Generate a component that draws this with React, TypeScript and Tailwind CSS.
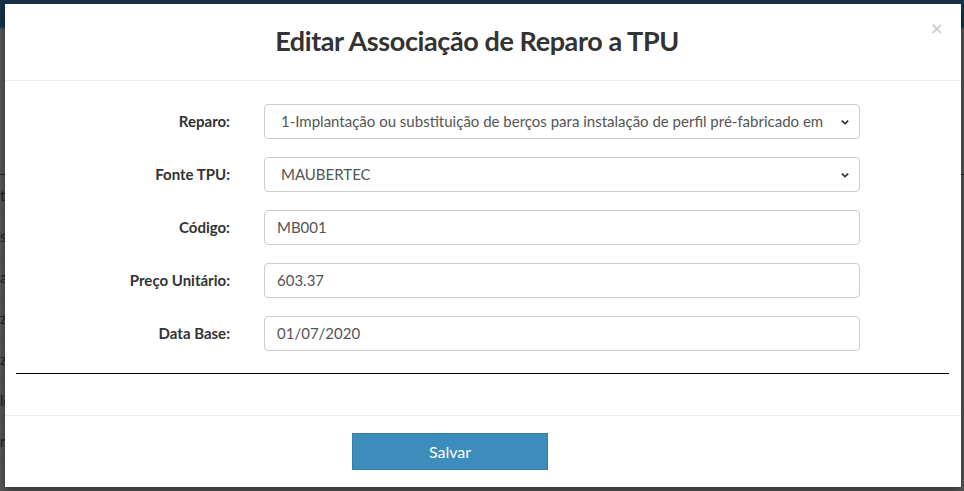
export default function App() {
  const rows = [
    { label: "Reparo:", value: "1-Implantação ou substituição de berços para instalação de perfil pré-fabricado em", select: true },
    { label: "Fonte TPU:", value: "MAUBERTEC", select: true },
    { label: "Código:", value: "MB001" },
    { label: "Preço Unitário:", value: "603.37" },
    { label: "Data Base:", value: "01/07/2020" },
  ];

  return (
    <div className="relative h-[491px] w-[964px] overflow-hidden bg-[#5a5a5a] font-['Lato',sans-serif]">
      {/* page behind the backdrop */}
      <div className="flex h-[27px] items-start bg-[#17344a] pl-[10px] text-[17px] leading-[4px] text-[#6f7d88]">
        <span className="-mt-[10px]">Sistema de Gerenciamento de Obras de Arte</span>
      </div>
      <div className="h-[2px] bg-[#1f4d6b]" />
      <div className="mt-[145px] border-t border-[#222]">
        {["tipo", "status", "ação", "zona", "zona", "lote", "rede"].map((t, i) => (
          <div key={i} className="flex h-[41px] items-center border-b border-[#555] text-[15px] text-[#222]">
            {t}
          </div>
        ))}
      </div>

      {/* modal */}
      <div className="absolute left-[5px] top-[4px] flex h-[483px] w-[956px] flex-col bg-white shadow-[0_3px_9px_rgba(0,0,0,0.5)]">
        <div className="relative flex h-[77px] shrink-0 items-center justify-center border-b border-[#eeeeee] pr-[12px]">
          <h4 className="-mt-[2px] text-[27px] font-bold tracking-[-0.4px] text-[#333]">
            Editar Associação de Reparo a TPU
          </h4>
          <button className="absolute right-[18px] top-[13px] text-[21px] font-bold leading-none text-black/20">
            ×
          </button>
        </div>

        <div className="flex flex-1 flex-col px-[11px] pt-[23px]">
          <div className="flex flex-col gap-[18px]">
            {rows.map((r) => (
              <div key={r.label} className="flex items-center">
                <label className="w-[214px] text-right text-[15px] font-bold text-[#333]">
                  {r.label}
                </label>
                <div
                  className={
                    r.select
                      ? "ml-[34px] flex h-[35px] w-[596px] items-center justify-between rounded-[4px] border border-[#cccccc] bg-white pl-[16px] pr-[9px] text-[15px] text-[#555]"
                      : "ml-[34px] flex h-[35px] w-[596px] items-center rounded-[4px] border border-[#cccccc] bg-white pl-[12px] text-[15px] text-[#555]"
                  }
                >
                  <span className="overflow-hidden whitespace-nowrap">{r.value}</span>
                  {r.select && (
                    <svg width="10" height="8" viewBox="0 0 10 8" className="ml-[8px] shrink-0">
                      <path d="M1.8 2.6 L5 5.6 L8.2 2.6" fill="none" stroke="#333" strokeWidth="1.7" />
                    </svg>
                  )}
                </div>
              </div>
            ))}
          </div>
          <div className="mt-[22px] h-px w-[933px] bg-black" />
        </div>

        <div className="flex h-[72px] shrink-0 border-t border-[#eeeeee] pl-[347px] pt-[17px]">
          <button className="h-[37px] w-[196px] border border-[#367fa9] bg-[#3c8dbc] text-[16px] text-white">
            Salvar
          </button>
        </div>
      </div>
    </div>
  );
}
